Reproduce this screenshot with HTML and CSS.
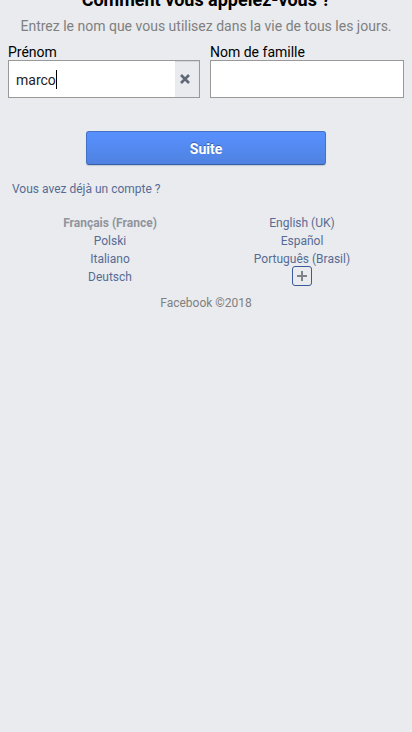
FILE: index.html
```html
<!DOCTYPE html>
<html lang="fr">
<head>
<meta charset="utf-8">
<meta name="viewport" content="width=device-width, initial-scale=1">
<title>Facebook</title>
<link rel="stylesheet" href="styles.css">
</head>
<body>
<main>
  <form class="signup">
    <h1 class="title">Comment vous appelez-vous ?</h1>
    <p class="hint">Entrez le nom que vous utilisez dans la vie de tous les jours.</p>
    <div class="fields">
      <div class="field">
        <label for="first">Prénom</label>
        <div class="control">
          <input id="first" type="text" value="marco">
          <span class="caret"></span>
          <button class="clear" type="button" aria-label="Effacer">
            <svg width="12" height="12" viewBox="0 0 12 12"><path d="M2 2l8 8M10 2l-8 8" stroke="#606878" stroke-width="2.6" fill="none"/></svg>
          </button>
        </div>
      </div>
      <div class="field">
        <label for="last">Nom de famille</label>
        <div class="control"><input id="last" type="text"></div>
      </div>
    </div>
    <button class="submit" type="submit">Suite</button>
  </form>
  <a class="login" href="#">Vous avez déjà un compte ?</a>
</main>
<footer>
  <div class="languages">
    <b>Français (France)</b>
    <a href="#">English (UK)</a>
    <a href="#">Polski</a>
    <a href="#">Español</a>
    <a href="#">Italiano</a>
    <a href="#">Português (Brasil)</a>
    <a href="#">Deutsch</a>
    <a class="more" href="#" aria-label="Plus de langues">
      <svg width="10" height="10" viewBox="0 0 10 10"><path d="M5 0v10M0 5h10" stroke="#7f8287" stroke-width="2" fill="none"/></svg>
    </a>
  </div>
  <p class="copyright">Facebook ©2018</p>
</footer>
</body>
</html>
```
FILE: styles.css
```css
* {
  box-sizing: border-box;
}

body {
  margin: 0;
  background: #e9ebee;
  color: #000;
  font: 14px/20px Roboto, sans-serif;
}

/* The heading is partly scrolled past the top edge. */
main {
  margin-top: -12px;
}

.title {
  margin: 0 0 4px;
  font-size: 18px;
  line-height: 24px;
  text-align: center;
}

.hint {
  margin: 0 0 8px;
  color: #808080;
  text-align: center;
}

.fields {
  display: grid;
  grid-template-columns: calc(50% - 6px) 1fr;
  gap: 10px;
  padding: 0 8px;
}

.field {
  min-width: 0;
}

.field label {
  display: block;
  line-height: 16px;
}

.control {
  position: relative;
  display: flex;
  height: 38px;
  border: 1px solid #999;
  background: #fff;
}

.control input {
  flex: 1;
  min-width: 0;
  padding: 2px 7px 0;
  border: 0;
  outline: 0;
  background: transparent;
  color: #1d2129;
  font: inherit;
}

.caret {
  position: absolute;
  top: 9px;
  left: 47px;
  width: 1px;
  height: 19px;
  background: #000;
}

.clear {
  display: flex;
  align-items: center;
  justify-content: center;
  width: 24px;
  padding: 0 4px 0 0;
  border: 0;
  background: #e9ebee;
  box-shadow: inset 0 1px 1px #d4d6da;
}

.submit {
  display: block;
  width: 240px;
  height: 34px;
  margin: 33px auto 15px;
  padding: 2px 0 0;
  border: 1px solid #4473c5;
  border-bottom-color: #365fa8;
  border-radius: 3px;
  background: linear-gradient(#5890ff, #4f82e0);
  box-shadow: 0 1px 1px #c4c8d0;
  color: #fff;
  font: bold 14px/20px Roboto, sans-serif;
  text-shadow: 0 -1px 0 #3560ad;
}

a {
  color: #576b95;
  text-decoration: none;
}

.login {
  display: block;
  padding: 0 12px;
  font-size: 12px;
  line-height: 18px;
}

footer {
  margin-top: 16px;
  font-size: 12px;
  line-height: 18px;
  text-align: center;
}

.languages {
  display: grid;
  grid-template-columns: 1fr 1fr;
  grid-auto-rows: 18px;
  align-items: end;
  padding: 0 14px;
}

.languages b {
  color: #90949c;
}

.more {
  display: flex;
  align-items: center;
  justify-content: center;
  justify-self: center;
  width: 20px;
  height: 20px;
  border: 1px solid #3b5998;
  border-radius: 3px;
}

.copyright {
  margin: 8px 0;
  color: #808080;
}
```
